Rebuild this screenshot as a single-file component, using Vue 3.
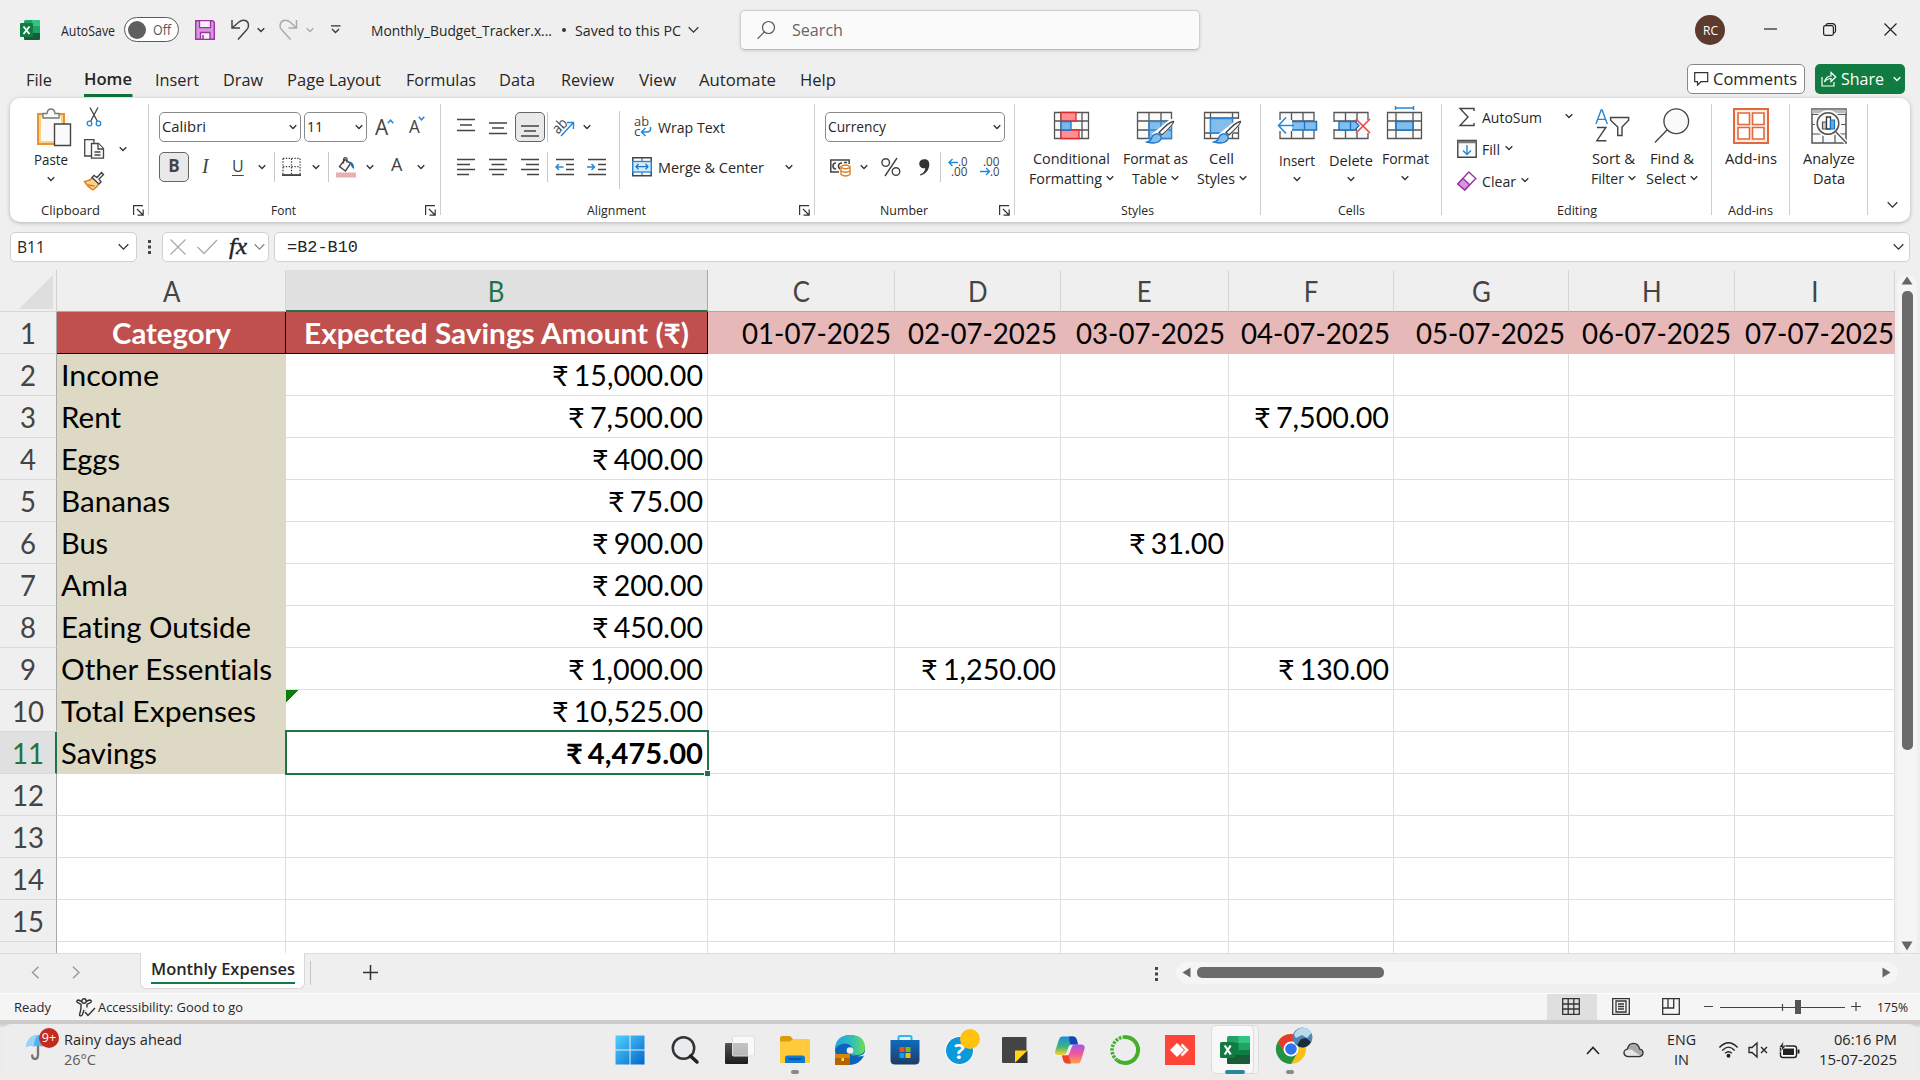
<script setup>
import { h } from 'vue'

/* Condenses or widens a label so that it takes exactly the given width. */
const vFit = {
  mounted(el, { value }) {
    if (!value) return
    const natural = el.getBoundingClientRect().width
    el.style.transform = `scaleX(${value / natural})`
    el.style.marginRight = `${value - natural}px`
  },
}

const Chev = (p) =>
  h('svg', { width: p.w || 8, height: p.w ? p.w * 0.6 : 6, viewBox: '0 0 9 6', fill: 'none', stroke: p.c || '#333', 'stroke-width': p.w ? 1 : 1.5 }, [
    h('path', { d: 'M.8 1l3.7 3.7L8.2 1' }),
  ])
const Launcher = () =>
  h('svg', { class: 'launch', width: 11, height: 11, viewBox: '0 0 11 11', fill: 'none', stroke: '#333', 'stroke-width': 1.2 }, [
    h('path', { d: 'M.6 10V.6H10M4 4l6 6M10.2 4.5v5.7H4.5' }),
  ])
const Lines = (p) =>
  h('svg', { width: 18, height: 18, viewBox: '0 0 18 18', stroke: '#444', 'stroke-width': 1.5 }, [h('path', { d: p.d })])

const tabs = [
  ['File', 26, 26], ['Home', 84, 48], ['Insert', 155, 44], ['Draw', 223, 40], ['Page Layout', 287, 94], ['Formulas', 406, 70],
  ['Data', 499, 36], ['Review', 561, 53], ['View', 639, 37], ['Automate', 699, 77], ['Help', 800, 36],
].map((t, i, a) => ({ name: t[0], w: t[2], track: (a[i + 1] ? a[i + 1][1] : 900) - t[1] }))

const cols = [
  ['A', 229], ['B', 422], ['C', 187], ['D', 166], ['E', 168], ['F', 165], ['G', 175], ['H', 166], ['I', 160],
]
const dates = ['01-07-2025', '02-07-2025', '03-07-2025', '04-07-2025', '05-07-2025', '06-07-2025', '07-07-2025']
const body = [
  ['Income', 98, '₹ 15,000.00', 151],
  ['Rent', 60, '₹ 7,500.00', 135, { F: ['₹ 7,500.00', 135] }],
  ['Eggs', 59, '₹ 400.00', 111],
  ['Bananas', 109, '₹ 75.00', 95],
  ['Bus', 47, '₹ 900.00', 111, { E: ['₹ 31.00', 95] }],
  ['Amla', 67, '₹ 200.00', 111],
  ['Eating Outside', 190, '₹ 450.00', 111],
  ['Other Essentials', 211, '₹ 1,000.00', 135, { D: ['₹ 1,250.00', 135], F: ['₹ 130.00', 111] }],
  ['Total Expenses', 195, '₹ 10,525.00', 151],
  ['Savings', 96, '₹ 4,475.00', 137],
]
const rows = []
for (let n = 1; n <= 16; n++) {
  const cells = cols.map(([c, w], i) => {
    const cell = { c, w, text: '', fit: 0, cls: [] }
    if (n === 1) {
      if (i === 0) Object.assign(cell, { text: 'Category', fit: 119, cls: ['head'] })
      else if (i === 1) Object.assign(cell, { text: 'Expected Savings Amount (₹)', fit: 385, cls: ['head'] })
      else Object.assign(cell, { text: dates[i - 2], fit: 149, cls: ['date', i === 8 ? 'edge' : ''] })
    } else if (n <= 11) {
      const r = body[n - 2]
      if (i === 0) Object.assign(cell, { text: r[0], fit: r[1], cls: ['cat'] })
      else if (i === 1) Object.assign(cell, { text: r[2], fit: r[3], cls: ['num', n === 11 ? 'sel' : '', n === 10 ? 'flag' : ''] })
      else if (r[4] && r[4][c]) Object.assign(cell, { text: r[4][c][0], fit: r[4][c][1], cls: ['num'] })
    }
    return cell
  })
  rows.push({ n, cells })
}
</script>

<template>
  <div class="screen">
    <header class="title">
      <svg class="xl" width="20" height="20" viewBox="0 0 20 20"><rect x="4" width="16" height="20" rx="1.5" fill="#21a366"/><path d="M12 0h6.5A1.5 1.5 0 0120 1.500V6h-8z" fill="#33c481"/><path d="M4 6h8v7H4z" fill="#107c41"/><path d="M4 13h16v5.500a1.500 1.500 0 01-1.500 1.500h-13A1.500 1.500 0 014 18.500z" fill="#185c37"/><path d="M12 6h8v7h-8z" fill="#21a366"/><rect y="3" width="13" height="14" rx="1" fill="#107c41"/><path d="M3.500 6.500l6 7.500M9.500 6.500l-6 7.500" stroke="#fff" stroke-width="1.900"/></svg>
      <span v-fit="54" class="s15">AutoSave</span>
      <div class="toggle"><i></i><span v-fit="18">Off</span></div>
      <svg width="20" height="20" viewBox="0 0 20 20"><path d="M.7.7h17l1.600 1.600v17H.7z" fill="#d896dd" stroke="#9a33a4" stroke-width="1.400"/><path d="M4.500.7h11v7h-11zM5.500 12.500h9.500v6.800H5.500z" fill="#f5f0f6" stroke="#9a33a4" stroke-width="1.300"/><path d="M8 15v4" stroke="#9a33a4" stroke-width="1.500"/></svg>
      <svg width="20" height="22" viewBox="0 0 20 22" fill="none" stroke="#444" stroke-width="1.500"><path d="M1 1v8h8M1 9L8 3c4-3.500 9.500-1.500 9.500 3.500.1 2-.8 3.300-2 4.500L7 20.500"/></svg>
      <Chev />
      <svg width="20" height="22" viewBox="0 0 20 22" fill="none" stroke="#aaa" stroke-width="1.500"><path d="M17.500 1v8h-8M17.500 9L11 3C7 -.5 1.500 1.500 1 6.500c-.1 2 .8 3.300 2 4.500l8.500 9.500"/></svg>
      <Chev c="#aaa" />
      <svg width="10" height="9" viewBox="0 0 10 9" fill="none" stroke="#333" stroke-width="1.300"><path d="M0 .8h9.500M1 4l3.500 3.500L8 4"/></svg>
      <span v-fit="181" class="s15">Monthly_Budget_Tracker.x...</span>
      <i class="dot"></i>
      <span v-fit="106" class="s15">Saved to this PC</span>
      <Chev :w="13" />
      <div class="search">
        <svg width="20" height="20" viewBox="0 0 20 20" fill="none" stroke="#555" stroke-width="1.200"><circle cx="11.500" cy="7.500" r="6"/><path d="M7.300 11.800L.5 18.800"/></svg>
        <span v-fit="51">Search</span>
      </div>
      <div class="avatar"><span v-fit="15">RC</span></div>
      <svg width="13" height="13" viewBox="0 0 13 13" stroke="#222" stroke-width="1.200"><path d="M0 6h13"/></svg>
      <svg width="13" height="13" viewBox="0 0 13 13" fill="none" stroke="#222" stroke-width="1.200"><rect x=".6" y="2.600" width="9.800" height="9.800" rx="1.800"/><path d="M3 2.200Q3.300.6 5 .6h4.500a3 3 0 013 3V8q0 1.500-1.600 2"/></svg>
      <svg width="13" height="13" viewBox="0 0 13 13" stroke="#222" stroke-width="1.200"><path d="M.5.500l12 12M12.500.5l-12 12"/></svg>
    </header>

    <nav class="tabs">
      <div class="tablist">
        <div v-for="t in tabs" :key="t.name" class="tab" :class="{ on: t.name === 'Home' }" :style="{ width: t.track + 'px' }">
          <span v-fit="t.w">{{ t.name }}</span>
        </div>
      </div>
      <button class="comments">
        <svg width="15" height="14" viewBox="0 0 15 14" fill="none" stroke="#333" stroke-width="1.200"><path d="M.7.7h13v9H7L3.500 13V9.700H.7z"/></svg>
        <span v-fit="84">Comments</span>
      </button>
      <button class="share">
        <svg width="16" height="16" viewBox="0 0 16 16" fill="none" stroke="#fff" stroke-width="1.200"><path d="M1 6v9h12v-4M3.500 11Q5 5 10 5V1.500L14.800 6 10 10.500V7.500Q6 7.500 3.500 11z"/></svg>
        <span v-fit="43">Share</span>
        <Chev c="#fff" />
      </button>
    </nav>

    <section class="ribbon">
      <div class="group g-clip">
        <div class="gbody clip">
          <div class="paste">
            <svg width="36" height="40" viewBox="0 0 36 40"><path d="M2 6h26v30H2z" fill="#fbd38a" stroke="#e8912d" stroke-width="2"/><path d="M5 9h20v24H5z" fill="#fafafa"/><path d="M7 10V5.500h4Q11.500 1 15 1t4 4.500h4V10z" fill="#fafafa" stroke="#777" stroke-width="1.300"/><path d="M18.500 16h16v21.500h-16z" fill="#fafafa" stroke="#444" stroke-width="1.400"/></svg>
            <span v-fit="34">Paste</span>
            <Chev />
          </div>
          <div class="clipcol">
            <svg width="20" height="20" viewBox="0 0 20 20" fill="none" stroke-width="1.300"><path d="M6 .5l7.500 14M14 .5l-7.500 14" stroke="#444"/><circle cx="5.500" cy="16.500" r="2.300" stroke="#2488d8"/><circle cx="14.500" cy="16.500" r="2.300" stroke="#2488d8"/></svg>
            <svg width="21" height="20" viewBox="0 0 21 20" fill="#fafafa" stroke="#444" stroke-width="1.300"><path d="M7 17H.7V.7H10v3"/><path d="M7.500 4.500h7l5 5v9.700h-12z"/><path d="M14 4.500v5.500h5.500M10.500 13h6M10.500 16h6"/></svg>
            <svg width="21" height="20" viewBox="0 0 21 20" stroke-width="1.400"><path d="M.5 10.500Q6.500 9.500 9 6.500l6 6Q13.500 16 9 19 3.500 16 .5 10.500z" fill="#fbd38a" stroke="#e07b1c"/><path d="M3.500 14l7 1" stroke="#e07b1c"/><path d="M8 6.500l2-2 3 2 4.500-5 2 2L15 8l2 3-2 2z" fill="#fafafa" stroke="#444"/></svg>
          </div>
          <div class="clipchev"><Chev /></div>
        </div>
        <div class="glabel"><span class="gl"><span v-fit="59">Clipboard</span></span><Launcher /></div>
      </div>
      <i class="sep"></i>

      <div class="group g-font">
        <div class="gbody">
          <div class="row font1">
            <div class="combo c142"><span v-fit="44">Calibri</span><Chev /></div>
            <div class="combo c63"><span v-fit="16">11</span><Chev /></div>
            <div class="grow"><span>A</span><svg width="7" height="5" viewBox="0 0 7 5" fill="none" stroke="#2488d8" stroke-width="1.500"><path d="M.7 4.200L3.500 1.200l2.800 3"/></svg></div>
            <div class="grow small"><span>A</span><svg width="7" height="5" viewBox="0 0 7 5" fill="none" stroke="#2488d8" stroke-width="1.500"><path d="M.7.8l2.800 3 2.800-3"/></svg></div>
          </div>
          <div class="row font2">
            <div class="press b">B</div>
            <span class="it">I</span>
            <span class="un">U</span>
            <Chev />
            <i class="vs"></i>
            <svg width="19" height="20" viewBox="0 0 20 20" fill="none" stroke="#444"><path d="M1 1h18v17M1 1v17M10 1v17M1 9.500h18" stroke-dasharray="1.500 1.500" stroke-width="1.300"/><path d="M0 18.500h20" stroke-width="2"/></svg>
            <Chev />
            <i class="vs"></i>
            <svg width="20" height="21" viewBox="0 0 20 21"><path d="M9 2.500l-5.500 7 6 4.500 5-7.500z" fill="#fafafa" stroke="#444" stroke-width="1.400"/><path d="M7.500 6.500V2Q9-.5 11 1.500v4" fill="none" stroke="#444" stroke-width="1.200"/><path d="M13.500 4.500Q18.500 5 18 12 15.500 11 14.500 7z" fill="#1a74c4"/><rect y="15.500" width="20" height="5" fill="#e6b0b0"/></svg>
            <Chev />
            <span class="ltr">A</span>
            <Chev />
          </div>
        </div>
        <div class="glabel"><span class="gl"><span v-fit="25">Font</span></span><Launcher /></div>
      </div>
      <i class="sep"></i>

      <div class="group g-align">
        <div class="gbody split">
          <div class="alleft">
            <div class="row al1">
              <Lines d="M0 1.500h18M3 7h12M0 12.500h18" />
              <Lines d="M0 5h18M3 10h12M0 15.500h18" />
              <div class="press"><Lines d="M0 8h18M3 13h12M0 18h18" /></div>
              <i class="vs"></i>
              <svg width="22" height="22" viewBox="0 0 22 22"><text x="-1" y="15" font-size="15" font-family="Open Sans" fill="#444" transform="rotate(-45 6 11)" textLength="15" lengthAdjust="spacingAndGlyphs">ab</text><path d="M7 20L19 7M13 6.500h6.500V13" fill="none" stroke="#2488d8" stroke-width="1.400"/></svg>
              <Chev />
            </div>
            <div class="row al2">
              <Lines d="M0 1.500h18M0 6.500h13M0 11.500h18M0 16.500h12" />
              <Lines d="M0 1.500h18M2.500 6.500h13M0 11.500h18M3 16.500h12" />
              <Lines d="M0 1.500h18M5 6.500h13M0 11.500h18M6 16.500h12" />
              <i class="vs"></i>
              <svg width="19" height="18" viewBox="0 0 19 18" fill="none" stroke="#444" stroke-width="1.500"><path d="M1 1.500h18M11 6.500h8M11 11.500h8M1 16.500h18"/><path d="M8.500 9H1M4 6L1 9l3 3" stroke="#2488d8"/></svg>
              <svg width="19" height="18" viewBox="0 0 19 18" fill="none" stroke="#444" stroke-width="1.500"><path d="M1 1.500h18M11 6.500h8M11 11.500h8M1 16.500h18"/><path d="M0 9h7.500M4.500 6l3 3-3 3" stroke="#2488d8"/></svg>
            </div>
          </div>
          <i class="vs tall"></i>
          <div class="alright">
            <div class="row wr">
              <svg width="20" height="22" viewBox="0 0 20 22"><text x="2" y="10" font-size="13.500" font-family="Open Sans" fill="#444" textLength="15" lengthAdjust="spacingAndGlyphs">ab</text><text x="2" y="20" font-size="13.500" font-family="Open Sans" fill="#444">c</text><path d="M18.500 11v2q0 3-3.500 3h-5M13.500 12l-4 4 4 4" fill="none" stroke="#2488d8" stroke-width="1.500"/></svg>
              <span v-fit="67">Wrap Text</span>
            </div>
            <div class="row wr">
              <svg width="20" height="20" viewBox="0 0 20 20"><path d="M.8.800h18.400v17.900H.8z" fill="#fafafa" stroke="#444" stroke-width="1.500"/><path d="M10 1v4M10 15v4" stroke="#444"/><rect x=".8" y="4.500" width="18.400" height="10.500" fill="#d5ebfb" stroke="#2488d8" stroke-width="1.300"/><path d="M4 9.700h12M6.500 7L4 9.700l2.500 2.700M13.500 7L16 9.700l-2.500 2.700" fill="none" stroke="#1a74c4" stroke-width="1.300"/></svg>
              <span v-fit="106">Merge &amp; Center</span>
              <Chev />
            </div>
          </div>
        </div>
        <div class="glabel"><span class="gl"><span v-fit="59">Alignment</span></span><Launcher /></div>
      </div>
      <i class="sep"></i>

      <div class="group g-num">
        <div class="gbody">
          <div class="row n1"><div class="combo c180"><span v-fit="58">Currency</span><Chev /></div></div>
          <div class="row n2">
            <svg width="21" height="19" viewBox="0 0 21 19"><path d="M19.200 6V2H.8v12H9" fill="#fafafa" stroke="#444" stroke-width="1.500"/><path d="M6 5Q3 5 3 8t3 3M12 5Q8.500 5 8.500 8q0 2 1.500 3M14 4.500h3" fill="none" stroke="#444" stroke-width="1.600"/><path d="M11 8.500v8q4.500 3 9 0v-8q-4.500-3-9 0zM11 9.500q4.500 2.500 9 0M11 13q4.500 2.500 9 0" fill="#fff" stroke="#e07b1c" stroke-width="1.400"/></svg>
            <Chev />
            <svg width="20" height="20" viewBox="0 0 20 20" fill="none" stroke="#444" stroke-width="1.400"><circle cx="4.700" cy="5.500" r="3.800"/><circle cx="15" cy="14.500" r="3.800"/><path d="M16 1L4 19"/></svg>
            <svg width="12" height="18" viewBox="0 0 12 18"><path d="M1 16.500Q6 14.500 6.300 10A4.500 4.500 0 114.500 1.300C8.500.5 10.500 3 10.300 7 10 12.500 6 16.500 1 17.500z" fill="#333"/></svg>
            <i class="vs"></i>
            <svg width="20" height="20" viewBox="0 0 20 20" fill="#444" font-family="Open Sans" font-size="12.500"><text x="10" y="9" textLength="9.500" lengthAdjust="spacingAndGlyphs">.0</text><text x="3" y="19" textLength="16.500" lengthAdjust="spacingAndGlyphs">.00</text><path d="M10 5.500H1M4.500 2L1 5.500 4.500 9" fill="none" stroke="#2488d8" stroke-width="1.400"/></svg>
            <svg width="20" height="20" viewBox="0 0 20 20" fill="#444" font-family="Open Sans" font-size="12.500"><text x="3" y="9" textLength="16.500" lengthAdjust="spacingAndGlyphs">.00</text><text x="10" y="19" textLength="9.500" lengthAdjust="spacingAndGlyphs">.0</text><path d="M0 14.500h9.500M6 11l3.500 3.500L6 18" fill="none" stroke="#2488d8" stroke-width="1.400"/></svg>
          </div>
        </div>
        <div class="glabel"><span class="gl"><span v-fit="48">Number</span></span><Launcher /></div>
      </div>
      <i class="sep"></i>

      <div class="group g-styles">
        <div class="gbody bigs st">
          <div class="big">
            <svg width="38" height="36" viewBox="0 0 38 36" stroke-width="1.300"><path d="M1.500 4.500h34v26h-34zM1.500 13h34M1.500 22h34M8 4.500v26M29 4.500v26" fill="#fafafa" stroke="#555"/><path d="M8 4.500h15V13H8zM8 22h18v8.500H8z" fill="#ff8f94" stroke="#d92c2c"/><path d="M8 13.500h10V22H8z" fill="#7ab6e8" stroke="#1a74c4"/></svg>
            <span v-fit="77">Conditional</span>
            <span class="two"><span v-fit="73">Formatting</span><Chev /></span>
          </div>
          <div class="big">
            <svg width="38" height="36" viewBox="0 0 38 36" stroke-width="1.300"><path d="M1.500 4.500h34v26h-34z" fill="#fafafa" stroke="#555"/><path d="M13 13.500h22.500v17H13z" fill="#83bdec"/><path d="M1.500 13h34M1.500 22H13M13 4.500v26M25 4.500V13" stroke="#555"/><path d="M13 22h22M25 13v17M13 13.500h22.500v17H13z" fill="none" stroke="#2f86cf"/><path d="M38 13L23 29l-4-3L35 13z" fill="#fafafa" stroke="#fff" stroke-width="4"/><path d="M37.500 13.500Q38 16 26 27l-3-2.500Q34 13 37.500 13.500z" fill="#fafafa" stroke="#444"/><path d="M11 34q4-1 5-5 2-4 6-3t3 5q-3 6-14 3z" fill="#83bdec" stroke="#1a74c4"/></svg>
            <span v-fit="65">Format as</span>
            <span class="two"><span v-fit="35">Table</span><Chev /></span>
          </div>
          <div class="big">
            <svg width="38" height="36" viewBox="0 0 38 36" stroke-width="1.300"><path d="M1.500 4.500h34v26h-34zM1.500 10h34M1.500 25h34M7.500 4.500v26M29.500 4.500v26" fill="#fafafa" stroke="#555"/><path d="M7.500 10.500h22V25h-22z" fill="#83bdec" stroke="#2f86cf"/><path d="M38 13L23 29l-4-3L35 13z" fill="#fafafa" stroke="#fff" stroke-width="4"/><path d="M37.500 13.500Q38 16 26 27l-3-2.500Q34 13 37.500 13.500z" fill="#fafafa" stroke="#444"/><path d="M11 34q4-1 5-5 2-4 6-3t3 5q-3 6-14 3z" fill="#83bdec" stroke="#1a74c4"/></svg>
            <span v-fit="25">Cell</span>
            <span class="two"><span v-fit="38">Styles</span><Chev /></span>
          </div>
        </div>
        <div class="glabel"><span class="gl"><span v-fit="33">Styles</span></span></div>
      </div>
      <i class="sep"></i>

      <div class="group g-cells">
        <div class="gbody bigs ce">
          <div class="big low">
            <svg width="40" height="36" viewBox="0 0 40 36" stroke-width="1.300"><path d="M3 4.500h34v26H3zM3 13h34M14.500 4.500v26M26 4.500v26" fill="#fafafa" stroke="#555"/><path d="M14 13.500h25.500V22H14z" fill="#83bdec" stroke="#1a74c4" stroke-width="1.500"/><path d="M27.500 13.500V22" stroke="#1a74c4"/><path d="M0 12h15v11H0z" fill="#fff"/><path d="M17 17.500H1.500M9 9.500l-7.500 8 7.500 8" fill="none" stroke="#2488d8" stroke-width="1.500"/></svg>
            <span v-fit="36">Insert</span><Chev />
          </div>
          <div class="big low">
            <svg width="40" height="36" viewBox="0 0 40 36" stroke-width="1.300"><path d="M3 4.500h34v26H3zM3 13h34M3 22h34M14.500 4.500v26M26 4.500v26" fill="#fafafa" stroke="#555"/><path d="M0 14h8v7H0zM26 12h14v13H26z" fill="#fff"/><path d="M8 13.500h16l4 4-4 4.500H8zM19.500 13.500V22" fill="#83bdec" stroke="#1a74c4" stroke-width="1.400"/><path d="M25 11l14 14M39 11L25 25" stroke="#ef4848" stroke-width="1.700"/></svg>
            <span v-fit="44">Delete</span><Chev />
          </div>
          <div class="big">
            <svg width="38" height="36" viewBox="0 0 38 36" stroke-width="1.300"><path d="M9.500-2v4M27.500-2v4M9.500 0h18" stroke="#2488d8" stroke-width="1.500"/><path d="M1.500 4.500h34v26h-34zM1.500 13h34M1.500 22h34M10 4.500v26M27 4.500v26" fill="#fafafa" stroke="#555"/><path d="M10 13.500h17V22H10z" fill="#83bdec" stroke="#1a74c4" stroke-width="1.500"/></svg>
            <span v-fit="47">Format</span><span class="two"><Chev /></span>
          </div>
        </div>
        <div class="glabel"><span class="gl"><span v-fit="27">Cells</span></span></div>
      </div>
      <i class="sep"></i>

      <div class="group g-edit">
        <div class="gbody ed">
          <div class="edleft">
            <div class="edrow">
              <svg width="20" height="20" viewBox="0 0 20 20" fill="none" stroke="#444" stroke-width="1.400"><path d="M17 4V1.500H3L11 10l-8 8.500h14V16"/></svg>
              <span v-fit="60">AutoSum</span><Chev class="far" />
            </div>
            <div class="edrow">
              <svg width="20" height="20" viewBox="0 0 20 20" fill="#fafafa" stroke="#444" stroke-width="1.400"><path d="M.8 1.500h18.400v16.700H.8z"/><path d="M.8 3h18.400" stroke-width="2.500" stroke="#777"/><path d="M10 6v9M6 11.500l4 4 4-4" fill="none" stroke="#2488d8"/></svg>
              <span v-fit="18">Fill</span><Chev />
            </div>
            <div class="edrow">
              <svg width="20" height="20" viewBox="0 0 20 20" stroke="#9a33a4" stroke-width="1.400"><path d="M11.800 1l7 6.500-11 11.500-7-6z" fill="#fff"/><path d="M6 7.500l6.500 6-4.700 5.500-7-6z" fill="#d896dd"/></svg>
              <span v-fit="34">Clear</span><Chev />
            </div>
          </div>
          <div class="big">
            <svg width="40" height="38" viewBox="0 0 40 38" fill="none" stroke-width="1.500"><path d="M2 17L7.500 2h1L14 17M4 12h8" stroke="#2488d8"/><path d="M3 20.500h9.500L3 34.500h10" stroke="#444"/><path d="M17.500 10h19v3l-7 7v9h-4.500v-9l-7.500-7z" stroke="#444" fill="#fafafa"/></svg>
            <span v-fit="43">Sort &amp;</span>
            <span class="two"><span v-fit="33">Filter</span><Chev /></span>
          </div>
          <div class="big">
            <svg width="38" height="38" viewBox="0 0 38 38" fill="#fafafa" stroke="#444" stroke-width="1.400"><circle cx="23.500" cy="14" r="13"/><path d="M14 23L1 36.500"/></svg>
            <span v-fit="44">Find &amp;</span>
            <span class="two"><span v-fit="40">Select</span><Chev /></span>
          </div>
        </div>
        <div class="glabel"><span class="gl"><span v-fit="40">Editing</span></span></div>
      </div>
      <i class="sep"></i>

      <div class="group g-add">
        <div class="gbody bigs one">
          <div class="big">
            <svg width="36" height="36" viewBox="0 0 36 36" fill="none" stroke="#e2683d" stroke-width="2"><path d="M1 1h34v34H1z" fill="#fdeee8"/><path d="M5 5h11.500v11.500H5zM19.500 5H31v11.500H19.500zM5 19.500h11.500V31H5zM19.500 19.500H31V31H19.500z" fill="#fff" stroke-width="1.600"/></svg>
            <span v-fit="52">Add-ins</span>
          </div>
        </div>
        <div class="glabel"><span class="gl"><span v-fit="45">Add-ins</span></span></div>
      </div>
      <i class="sep"></i>

      <div class="group g-add">
        <div class="gbody bigs one">
          <div class="big">
            <svg width="36" height="36" viewBox="0 0 36 36" fill="none" stroke="#555" stroke-width="1.500"><path d="M1 1h34v34H1z" fill="#fafafa"/><path d="M1 3.500h34" stroke="#bbb" stroke-width="3.500"/><path d="M1 6.500h34M1 16.500h34M1 26h34M12 26v9M24 26v9" stroke-width="1.200"/><circle cx="17" cy="15.500" r="12.500" fill="#fff" stroke="#fff"/><circle cx="17" cy="15.500" r="10.800" fill="#fafafa"/><path d="M25 24l10 10.500" stroke="#fff" stroke-width="4"/><path d="M24.500 23.500l11 11.500"/><path d="M11.500 14h4v7h-4z" fill="#ccc" stroke-width="1.200"/><path d="M15.500 9h4v12h-4z" fill="#fff" stroke="#333" stroke-width="1.300"/><path d="M19.500 12h4v9h-4z" fill="#62a9e4" stroke="#1a74c4" stroke-width="1.200"/></svg>
            <span v-fit="52">Analyze</span>
            <span class="two"><span v-fit="32">Data</span></span>
          </div>
        </div>
      </div>
      <i class="sep"></i>
      <div class="collapse"><Chev :w="13" /></div>
    </section>

    <section class="fbar">
      <div class="box name"><span v-fit="28">B11</span><Chev :w="13" /></div>
      <svg width="3" height="14" viewBox="0 0 3 14" fill="#444"><path d="M0 0h3v3H0zM0 5.500h3v3H0zM0 11h3v3H0z"/></svg>
      <div class="box tools">
        <svg width="16" height="16" viewBox="0 0 16 16" stroke="#aaa" stroke-width="1.300"><path d="M.5.500l15 15M15.500.5l-15 15"/></svg>
        <svg width="21" height="16" viewBox="0 0 21 16" fill="none" stroke="#aaa" stroke-width="1.300"><path d="M.5 8l6.500 6.500L20 1"/></svg>
        <span class="fx" v-fit="18">fx</span>
        <Chev :w="13" c="#888" />
      </div>
      <div class="box formula"><span v-fit="71">=B2-B10</span><Chev :w="13" /></div>
    </section>

    <main class="sheet">
      <div class="grid">
        <div class="colhead">
          <div class="corner"><svg width="34" height="34" viewBox="0 0 34 34"><path d="M34 0v34H0z" fill="#dedede"/></svg></div>
          <div v-for="c in cols" :key="c[0]" class="ch" :class="{ act: c[0] === 'B' }" :style="{ width: c[1] + 'px' }"><span>{{ c[0] }}</span></div>
        </div>
        <div v-for="r in rows" :key="r.n" class="line" :class="{ actr: r.n === 11 }">
          <div class="rh"><span v-if="r.n < 16" v-fit="r.n > 9 ? 32 : 16">{{ r.n }}</span></div>
          <div v-for="c in r.cells" :key="c.c" class="cell" :class="c.cls" :style="{ width: c.w + 'px' }">
            <span v-if="c.text" v-fit="c.fit">{{ c.text }}</span>
          </div>
        </div>
      </div>
      <div class="vscroll">
        <svg width="12" height="9" viewBox="0 0 12 9"><path d="M6 .5l5.500 8H.5z" fill="#666"/></svg>
        <i></i>
        <svg width="12" height="10" viewBox="0 0 12 10"><path d="M.5.500h11L6 9.500z" fill="#666"/></svg>
      </div>
    </main>

    <section class="sheets">
      <svg width="8" height="13" viewBox="0 0 8 13" fill="none" stroke="#999" stroke-width="1.400"><path d="M7.500 .7L1.500 6.500l6 5.800"/></svg>
      <svg width="8" height="13" viewBox="0 0 8 13" fill="none" stroke="#999" stroke-width="1.400"><path d="M1 .7l6 5.800-6 5.800"/></svg>
      <div class="stab"><span><b v-fit="144">Monthly Expenses</b></span></div>
      <i class="ssep"></i>
      <svg class="plus" width="15" height="15" viewBox="0 0 15 15" stroke="#333" stroke-width="1.500"><path d="M7.500 0v15M0 7.500h15"/></svg>
      <svg class="dots" width="3" height="14" viewBox="0 0 3 14" fill="#444"><path d="M0 0h3v3H0zM0 5.500h3v3H0zM0 11h3v3H0z"/></svg>
      <div class="hscroll">
        <svg width="9" height="11" viewBox="0 0 9 11"><path d="M8.500.5v10L.5 5.500z" fill="#666"/></svg>
        <i></i>
        <svg width="9" height="11" viewBox="0 0 9 11"><path d="M.5.5v10l8-5z" fill="#666"/></svg>
      </div>
    </section>

    <section class="status">
      <span v-fit="37">Ready</span>
      <svg class="acc" width="20" height="19" viewBox="0 0 20 19" fill="none" stroke="#333" stroke-width="1.400"><circle cx="8" cy="3" r="2.200"/><path d="M5.800 3.500L2.500 2Q.5 2 1 4l4 2.500v4L3.500 17q1.500 2 3-.5L8 12M10 3.500L13.500 2q2.500 0 1.500 2.300L11 6.500v3M9 14l3 3.500L19 10"/></svg>
      <span v-fit="145">Accessibility: Good to go</span>
      <div class="views">
        <div class="vw on"><svg width="18" height="17" viewBox="0 0 18 17" fill="none" stroke="#333" stroke-width="1.300"><path d="M.7.7h16.600v15.600H.7zM6.200.7v15.600M11.800.7v15.600M.7 6h16.600M.7 11h16.600"/></svg></div>
        <div class="vw"><svg width="18" height="17" viewBox="0 0 18 17" fill="none" stroke="#333" stroke-width="1.300"><path d="M.7.7h16.600v15.600H.7zM4 3h10v11H4zM6 6h6M6 8.500h6M6 11h6"/></svg></div>
        <div class="vw"><svg width="18" height="17" viewBox="0 0 18 17" fill="none" stroke="#333" stroke-width="1.300"><path d="M.7.7h16.600v15.600H.7zM.7 10h11V.7M6 .7V10"/></svg></div>
      </div>
      <svg class="zoom" width="154" height="16" viewBox="0 0 154 16" stroke="#444" stroke-width="1.200"><path d="M0 7.500h9M147 7.500h10M152 3v9M16 8.500h125M78.500 5v7"/><rect x="91" y="1" width="6" height="14" fill="#555" stroke="none"/></svg>
      <span v-fit="31">175%</span>
    </section>

    <footer class="task">
      <div class="bar">
        <div class="weather">
          <svg width="32" height="40" viewBox="0 0 32 40"><path d="M12 16v16.500q-.3 3.500-3 3.500t-2.800-3.500" fill="none" stroke="#7a7470" stroke-width="2.300" stroke-linecap="round"/><path d="M0 24Q2 12 12 12t12 12l-4-1.500-4 1-4-1-4 1-4-1z" fill="#52b1f5"/><path d="M0 24Q2 12 12 12q-4 4-4 11.500l-4-1z" fill="#9ad2fb"/></svg>
          <span class="badge">9+</span>
        </div>
        <div class="wtext"><span v-fit="118">Rainy days ahead</span><span class="dim" v-fit="32">26°C</span></div>

        <div class="apps">
          <div class="app"><svg width="30" height="30" viewBox="0 0 30 30"><defs><linearGradient id="win" x2="1" y2="1"><stop stop-color="#52d2ff"/><stop offset="1" stop-color="#0067cc"/></linearGradient></defs><path d="M.5.500h14v14H.5zM15.500.500h14v14h-14zM.5 15.500h14v14H.5zM15.500 15.500h14v14h-14z" fill="url(#win)"/></svg></div>
          <div class="app"><svg width="30" height="30" viewBox="0 0 30 30"><circle cx="13.500" cy="13" r="10.700" fill="#e9ebed" stroke="#333" stroke-width="2.500"/><path d="M20.500 21l6.500 6" stroke="#222" stroke-width="3.500" stroke-linecap="round"/></svg></div>
          <div class="app"><svg width="32" height="30" viewBox="0 0 32 30"><defs><linearGradient id="tv" x2="0" y2="1"><stop stop-color="#555"/><stop offset="1" stop-color="#1b1b1b"/></linearGradient></defs><rect x="1" y="8" width="23" height="21" rx="1" fill="url(#tv)"/><rect x="8.500" y="1" width="22" height="20" rx="1" fill="#fff" fill-opacity=".65" stroke="#ddd"/></svg></div>
          <div class="app run"><svg width="30" height="30" viewBox="0 0 30 30"><path d="M0 3q0-2 2-2h8l3 3v4H0z" fill="#dd9c05"/><path d="M0 6.500h10L13 4h15.500Q30 4 30 5.500V28H0z" fill="#ffcb3c"/><path d="M5 28v-5q0-2.500 2.500-2.500h15Q25 20.500 25 23v5z" fill="#1279d3"/><path d="M8.500 24h13" stroke="#0a4f96" stroke-width="1.500"/></svg></div>
          <div class="app"><svg width="30" height="30" viewBox="0 0 30 30"><defs><linearGradient id="eg"><stop stop-color="#1ba3e8"/><stop offset=".6" stop-color="#35c1b4"/><stop offset="1" stop-color="#6ddf4d"/></linearGradient></defs><circle cx="15" cy="15" r="15" fill="#0c64b8"/><path d="M0 14Q1 0 15 0q15 0 15 13 0 7-8 7-5 0-6-2 3-3 1-6Q13 7 7 9q-4 1-7 5z" fill="url(#eg)"/><path d="M16 18q2 4 12 3l2-1v-3q-2 4-8 4t-6-3z" fill="#ededed"/><circle cx="15" cy="15.500" r="3.300" fill="#ededed"/><path d="M0 19h15v11H0z" fill="#b46500"/><path d="M0 19h15v4H0z" fill="#d98508"/><path d="M6.500 23h2.500v3H6.500z" fill="#ffd84c"/></svg></div>
          <div class="app"><svg width="30" height="30" viewBox="0 0 30 30"><defs><linearGradient id="st" x2="0" y2="1"><stop stop-color="#0f6cbd"/><stop offset="1" stop-color="#1e3a66"/></linearGradient></defs><path d="M8.500 6V2.500Q8.500 1 10 1h10q1.500 0 1.500 1.500V6" fill="none" stroke="#28b9f0" stroke-width="2"/><path d="M.5 5h29v20q0 4.500-4.500 4.500H5Q.5 29.500.5 25z" fill="url(#st)"/><path d="M9.500 12h5v5h-5z" fill="#f25022"/><path d="M15.500 12h5v5h-5z" fill="#7fba00"/><path d="M9.500 18h5v5h-5z" fill="#00a4ef"/><path d="M15.500 18h5v5h-5z" fill="#ffb900"/></svg></div>
          <div class="app"><div class="help">?<i></i></div></div>
          <div class="app"><svg width="28" height="28" viewBox="0 0 28 28"><path d="M2 1h23.500v26H2q-1 0-1-1V2q0-1 1-1z" fill="#444"/><path d="M14 27V14.500h12.500z" fill="#ffd60a"/><path d="M26.500 14.500V27H14z" fill="#333"/></svg></div>
          <div class="app"><svg width="30" height="28" viewBox="0 0 30 28"><defs><linearGradient id="ca" x2="0" y2="1"><stop stop-color="#1a8ee0"/><stop offset=".55" stop-color="#3fb37a"/><stop offset="1" stop-color="#ffd02f"/></linearGradient><linearGradient id="cb" x2="0" y2="1"><stop stop-color="#a458ee"/><stop offset=".5" stop-color="#ef5a98"/><stop offset="1" stop-color="#ffa24c"/></linearGradient></defs><path d="M7 .5h11q3 0 4 4l1 4h-6q-3 0-4 4l-1.500 4Q10.500 19 8 19H3Q-1 19 .5 14L4 3.500Q5 .5 7 .5z" fill="url(#ca)"/><path d="M14 .5h4q3 0 4 4l1 4h-6q-2.500 0-2.500-3z" fill="#1743b8"/><path d="M23 27.500H12q-3 0-4-4L7 19.500h4q3 0 4-4l2-5q.7-2 3-2h6q4.500 0 3.500 4.500L26 24.500q-1 3-3 3z" fill="url(#cb)"/><path d="M7 19.500h5q2 0 2.500 3L16 27.500h-4q-3 0-4-4z" fill="#e8452c"/></svg></div>
          <div class="app"><svg width="30" height="30" viewBox="0 0 30 30" fill="none" stroke="#43b02a"><path d="M15 2A13 13 0 117 25.200" stroke-width="4"/><path d="M15 2A13 13 0 007 25.200" stroke-width="3.500" stroke-dasharray="2.500 1.200"/></svg></div>
          <div class="app"><svg width="30" height="30" viewBox="0 0 30 30"><path d="M0 0h30v30H0z" fill="#ff4438"/><path d="M12 8l7 7-7 7-7-7z" fill="#fff"/><path d="M16.500 9.500L22 15l-5.500 5.500" fill="none" stroke="#fff" stroke-width="2.500"/></svg></div>
          <div class="app tile"><svg width="30" height="28" viewBox="0 0 30 28"><rect x="7" width="23" height="28" rx="1.500" fill="#21a366"/><path d="M18.500 0h10Q30 0 30 1.500V7H18.500z" fill="#33c481"/><path d="M7 7h11.500v12H7z" fill="#107c41"/><path d="M7 19h23v7.500q0 1.500-1.500 1.500h-20Q7 28 7 26.500z" fill="#185c37"/><path d="M18.500 14H30v5H18.500z" fill="#107c41"/><rect y="6" width="15.500" height="16" rx="1.500" fill="#107c41"/><path d="M4.700 9.500l6 9M10.700 9.500l-6 9" stroke="#fff" stroke-width="2.200"/></svg></div>
          <div class="app run chrome"><svg width="38" height="38" viewBox="0 0 38 38"><g transform="translate(1 7)"><circle cx="15" cy="15" r="15" fill="#fbc116"/><path d="M2 7.500A15 15 0 0128 7.500H15L8.500 19z" fill="#e33b2e"/><path d="M2 7.500A15 15 0 0015 30l6.500-11.500h-13z" fill="#229342"/><circle cx="15" cy="15" r="7.500" fill="#fff"/><circle cx="15" cy="15" r="5.800" fill="#2f74ee"/></g><circle cx="27.500" cy="10.500" r="10" fill="#4a86b8"/><path d="M19 8q2-7 9-7.300 6 .3 8.500 5.300L32 11l-5-3-6 3z" fill="#b9d9ec"/><path d="M22 18l4-6 5-1 5 4q-3 5-8 5.500-4 0-6-2.500z" fill="#1c2b38"/></svg></div>
        </div>

        <div class="tray">
          <svg width="14" height="9" viewBox="0 0 14 9" fill="none" stroke="#222" stroke-width="1.600"><path d="M1 8l6-6.500L13 8"/></svg>
          <svg width="21" height="16" viewBox="0 0 22 16"><path d="M5 14.800Q1 14.500 1 11q0-3 3.500-4Q6 1 11 1t6.500 6q3.500.5 3.500 4t-4 3.800z" fill="#aaa" stroke="#333" stroke-width="1.400"/><path d="M2 9q6-3 9 0l7 5H5q-3.500-1-3-5z" fill="#e6e6e6"/></svg>
          <div class="lang"><span v-fit="29">ENG</span><span v-fit="15">IN</span></div>
          <svg width="21" height="18" viewBox="0 0 22 18" fill="none" stroke="#222" stroke-width="1.500"><path d="M1.500 6.500Q11-3.500 20.500 6.500M4.500 9.500q6.500-7 13 0M7.500 12.500q3.500-3.500 7 0"/><circle cx="11" cy="15" r="1.300" fill="#222"/></svg>
          <svg width="21" height="16" viewBox="0 0 21 16" fill="none" stroke="#222" stroke-width="1.300"><path d="M1 5.500h3L9 1v14l-5-4.500H1zM13 5l6 6M19 5l-6 6"/></svg>
          <svg width="22" height="18" viewBox="0 0 22 18"><rect x="2.500" y="5" width="16" height="11.500" rx="2.500" fill="#fff" stroke="#222" stroke-width="1.400"/><rect x="5" y="7.500" width="11" height="6.500" fill="#222"/><path d="M20.500 8.500v4" stroke="#222" stroke-width="2"/><path d="M5.500 0L1 6.500h3L2.500 11 8 5H5z" fill="#222" stroke="#ededed" stroke-width=".6"/></svg>
          <div class="clock"><span v-fit="63">06:16 PM</span><span v-fit="78">15-07-2025</span></div>
        </div>
      </div>
    </footer>
  </div>
</template>

<style>
body { margin: 0; }
svg { display: block; flex: none; overflow: visible; }
</style>

<style scoped>
.screen { width: 1920px; height: 1080px; overflow: hidden; background: #efefef; display: flex; flex-direction: column; font-family: "Open Sans", "Noto Sans", sans-serif; font-size: 14.5px; color: #262626; }
span, b { display: inline-block; white-space: nowrap; transform-origin: 0 50%; flex: none; }
i { display: block; flex: none; font-style: normal; }
button { font: inherit; color: inherit; padding: 0; box-sizing: border-box; }

.title { height: 60px; display: grid; align-items: center; justify-items: start; padding-left: 20px; grid-template-columns: 41px 63px 71px 36px 26px 22px 27px 25px 40px 190px 14px 112px 53px 955px 69px 59px 61px 30px; }
.s15 { font-size: 14.5px; }
.toggle { width: 55px; height: 25px; box-sizing: border-box; border: 1px solid #5a5a5a; border-radius: 13px; background: #fff; display: flex; align-items: center; padding-left: 3px; gap: 7px; font-size: 14px; color: #555; }
.toggle i { width: 18px; height: 18px; border-radius: 50%; background: #5f5f5f; }
.toggle, .title > svg { margin-top: -1px; }
.dot { width: 4px; height: 4px; border-radius: 50%; background: #333; margin-left: 1px; }
.search { width: 460px; height: 40px; box-sizing: border-box; border: 1px solid #d0d0d0; border-bottom-color: #bbb; border-radius: 5px; background: #fafafa; box-shadow: 0 1px 3px rgba(0,0,0,.15); display: flex; align-items: center; padding-left: 16px; gap: 15px; font-size: 16.5px; color: #666; }
.search span { position: relative; top: -1px; }
.avatar { width: 30px; height: 30px; border-radius: 50%; background: #5d3a2e; color: #fff; display: flex; align-items: center; justify-content: center; font-size: 12px; }

.tabs { height: 38px; display: flex; align-items: center; padding-left: 26px; box-sizing: border-box; font-size: 16.8px; }
.tablist { display: flex; width: 1661px; }
.tab { height: 36px; display: flex; align-items: center; padding-top: 1px; margin-left: -.3px; margin-right: .3px; }
.tab.on { font-weight: 600; }
.tab.on span { background: linear-gradient(#0f703b, #0f703b) 0 31px / 100% 3px no-repeat; padding: 4px 0 7px; }
.comments, .share { height: 30px; border-radius: 5px; display: flex; align-items: center; font-size: 16.8px; }
.comments { width: 118px; border: 1px solid #888; background: #fff; padding-left: 6px; gap: 4px; }
.comments span, .share span { margin-top: -1px; }
.share { width: 90px; border: 0; background: #107c41; color: #fff; margin-left: 10px; padding-left: 6px; gap: 4px; }
.share svg:last-child { margin-left: 5px; }

.ribbon { height: 124px; margin: 0 10px; border-radius: 10px; background: #fff; display: flex; box-shadow: 0 1px 4px rgba(0,0,0,.25); flex: none; }
.sep { width: 1px; margin: 6px 0 7px; background: #cfcfcf; }
.group { display: flex; flex-direction: column; flex: none; }
.gbody { height: 100px; flex: none; }
.glabel { height: 24px; display: flex; align-items: center; font-size: 13px; }
.gl { flex: 1; display: flex; justify-content: center; }
.launch { margin: 0 4px 0 7px; }
.g-clip { width: 138px; } .g-font { width: 291px; } .g-align { width: 373px; } .g-num { width: 199px; }
.g-clip .launch { margin-left: 2px; }
.g-styles { width: 245px; } .g-cells { width: 180px; } .g-edit { width: 269px; } .g-add { width: 77px; }
.row { height: 30px; display: grid; align-items: center; justify-items: start; margin-top: 10px; }
.row:first-child { margin-top: 14px; }

.clip { display: flex; }
.paste { width: 62px; margin-left: 10px; padding-top: 10px; display: flex; flex-direction: column; align-items: center; }
.paste svg:first-child { margin-left: 5px; }
.paste span { margin-top: 2px; line-height: 20px; }
.paste svg:last-child { margin: 6px 1px 0 0; }
.clipcol { display: flex; flex-direction: column; gap: 12px; padding: 9px 0 0 2px; width: 33px; }
.clipchev { padding-top: 48px; margin-left: 2px; }
.combo { height: 30px; box-sizing: border-box; border: 1px solid #8a8a8a; border-radius: 5px; background: #fff; display: flex; align-items: center; justify-content: space-between; padding: 0 3px 1px 2px; }
.combo span { flex: none; }
.c142 { width: 142px; } .c63 { width: 63px; } .c180 { width: 180px; }
.font1 { grid-template-columns: 145px 71px 34px 30px; padding-left: 10px; }
.grow { display: flex; color: #444; font-size: 22px; line-height: 26px; margin-top: -2px; }
.grow span { transform: scaleX(.95); }
.grow svg { margin-top: 6px; margin-left: -2px; }
.grow.small { font-size: 18px; line-height: 32px; margin-top: -2px; }
.font2 { grid-template-columns: 43px 30px 26px 16px 8px 30px 16px 8px 30px 25px 26px 10px; padding-left: 10px; color: #444; }
.press { width: 30px; height: 30px; box-sizing: border-box; border: 1px solid #666; border-radius: 5px; background: #e9e9e9; display: flex; align-items: center; justify-content: center; }
.b { font-weight: 700; font-size: 17px; line-height: 26px; padding-bottom: 2px; }
.it { font-family: "Liberation Serif", serif; font-style: italic; font-size: 20px; position: relative; top: -1px; }
.un { font-size: 16px; text-decoration: underline; text-underline-offset: 3px; position: relative; top: -1px; }
.ltr { font-size: 18px; line-height: 20px; position: relative; top: -3px; }
.vs { width: 1px; height: 30px; background: #c8c8c8; }
.split { display: flex; }
.alleft { width: 178px; }
.al1 { grid-template-columns: 32px 26px 32px 7px 29px 10px; padding-left: 16px; }
.al2 { grid-template-columns: 32px 32px 26px 8px 32px 20px; padding-left: 16px; }
.tall { height: 78px; margin-top: 13px; }
.alright { padding-left: 12px; }
.wr { grid-template-columns: 26px 127px 10px; }
.n1 { padding-left: 10px; }
.n2 { grid-template-columns: 30px 21px 38px 21px 8px 32px 20px; padding-left: 15px; }

.bigs { display: grid; }
.st { grid-template-columns: 87px 80px 53px; padding-left: 13px; box-sizing: border-box; }
.ce { grid-template-columns: 54px 54px 54px; padding-left: 9px; box-sizing: border-box; }
.one { justify-content: center; }
.big { display: flex; flex-direction: column; align-items: center; padding-top: 10px; }
.big > svg:first-child { height: 36px; }
.big > span { line-height: 20px; margin-top: 5px; }
.big > .two { margin-top: 0; height: 20px; display: flex; align-items: center; gap: 4px; }
.two svg { margin-top: -3px; }
.big.low > span { margin-top: 7px; }
.big.low > svg:last-child { margin: 5px 1px 0 0; }
.ed { display: grid; grid-template-columns: 142px 58px 59px; }
.edleft { display: flex; flex-direction: column; padding: 3px 0 0 15px; }
.edrow { display: flex; align-items: center; height: 32px; gap: 5px; }
.edrow svg:last-child { margin-top: -3px; }
.far { margin-left: 18px; }
.collapse { padding: 103px 0 0 18px; }

.fbar { height: 30px; margin: 10px 10px 8px; display: flex; align-items: center; flex: none; }
.box { height: 30px; box-sizing: border-box; border: 1px solid #d0d0d0; border-radius: 5px; background: #fff; display: flex; align-items: center; }
.name { width: 127px; padding: 0 6px; justify-content: space-between; margin-right: 11px; font-size: 15.5px; }
.tools { width: 107px; margin-left: 11px; padding-left: 7px; gap: 11px; }
.tools svg:last-child { margin-left: -5px; }
.fx { font-family: "Liberation Serif", serif; font-style: italic; font-size: 23px; color: #222; line-height: 22px; -webkit-text-stroke: .4px #222; }
.formula { flex: 1; margin-left: 5px; padding: 0 4px 0 12px; justify-content: space-between; font-family: "Liberation Mono", monospace; font-size: 17px; }

.sheet { height: 683px; display: flex; flex: none; }
.grid { width: 1895px; overflow: hidden; background: #fff; font-family: Lato, "Open Sans", sans-serif; font-size: 28px; font-variant-ligatures: none; color: #000; }
.colhead { display: flex; height: 42px; background: #efefef; }
.corner { width: 57px; box-sizing: border-box; border-right: 1px solid #cfcfcf; border-bottom: 1px solid #d6d6d6; padding: 5px 3px 0 19px; }
.ch { box-sizing: border-box; border-right: 1px solid #d6d6d6; border-bottom: 1px solid #a8a8a8; text-align: center; line-height: 43px; color: #444; }
.ch span { transform: scaleX(.92); transform-origin: 58% 50%; }
.ch.act { background: #e0e0e0; color: #217346; border-bottom: 2px solid #217346; border-right-color: #aaa; }
.line { display: flex; height: 42px; }
.rh { width: 57px; box-sizing: border-box; border-right: 1px solid #a8a8a8; border-bottom: 1px solid #dadada; background: #efefef; color: #444; line-height: 42px; display: flex; justify-content: center; }
.actr .rh { background: #e0e0e0; color: #217346; border-right: 2px solid #217346; padding-left: 1px; }
.cell { box-sizing: border-box; border-right: 1px solid #dedede; border-bottom: 1px solid #dedede; line-height: 42px; padding: 0 4px; display: flex; flex: none; }
.head { background: #c0504d; color: #fff; font-weight: 700; border-color: #000; justify-content: center; }
.date { background: #e6b8b7; border-color: #e6b8b7; justify-content: flex-end; padding-right: 3px; }
.date.edge { padding-right: 0; }
.cat { background: #ddd9c4; border-color: #ddd9c4; }
.num { justify-content: flex-end; word-spacing: -2px; }
.flag { background: linear-gradient(135deg, #0a7d0a 8.500px, transparent 9px); }
.sel { font-weight: 700; position: relative; }
.sel::before { content: ""; position: absolute; inset: -2px -2px -2px -1px; border: 2px solid #217346; }
.sel::after { content: ""; position: absolute; right: -3px; bottom: -3px; width: 5px; height: 5px; background: #217346; border: solid #fff; border-width: 1px 0 0 1px; }
.vscroll { width: 20px; margin: 5px 0 -3px 2px; border-radius: 10px; background: #f5f5f5; display: flex; flex-direction: column; align-items: center; }
.vscroll i { width: 11px; height: 459px; border-radius: 5px; background: #6b6b6b; margin: 6px 0 191px; }
.vscroll svg:first-child { margin-top: 1px; }

.sheets { height: 40px; border-top: 1px solid #dcdcdc; box-sizing: border-box; display: flex; align-items: center; padding: 0 0 2px 31px; flex: none; }
.sheets > svg:nth-child(2) { margin-left: 33px; }
.stab { width: 165px; height: 36px; margin: -3px 0 0 60px; box-sizing: border-box; background: #fff; border: 1px solid #d8d8d8; border-top: 0; border-radius: 0 0 6px 6px; display: flex; justify-content: center; font-size: 16.5px; }
.stab b { font-weight: 600; line-height: 26px; }
.stab span { height: 31px; padding-top: 3px; box-sizing: border-box; border-bottom: 2px solid #107c41; }
.ssep { width: 1px; height: 24px; background: #c4c4c4; margin-left: 5px; }
.plus { margin-left: 52px; }
.dots { margin: 2px 0 0 777px; }
.hscroll { margin-left: 18px; width: 722px; height: 22px; border-radius: 11px; background: #f5f5f5; display: flex; align-items: center; padding: 0 6px; box-sizing: border-box; }
.hscroll i { width: 187px; height: 11px; border-radius: 5px; background: #6b6b6b; margin: 0 498px 0 6px; }

.status { height: 27px; background: #f5f5f5; border-top: 1px solid #fff; box-sizing: border-box; display: flex; align-items: center; padding-left: 14px; font-size: 13px; flex: none; }
.acc { margin: 0 2px 0 25px; }
.views { display: flex; margin-left: 1304px; height: 26px; }
.vw { width: 50px; display: flex; align-items: center; justify-content: center; }
.vw svg { margin: -1px 2px 0 0; }
.vw.on { background: #dfdfdf; }
.zoom { margin: 0 19px 0 7px; }

.task { height: 60px; box-sizing: border-box; padding: 4px 0 4px 4px; background: linear-gradient(#cfcbc8 0 4px, #efebe8 8px); flex: none; }
.bar { width: 1912px; height: 52px; border-radius: 7px; background: #ededed; display: flex; }
.weather { width: 32px; height: 40px; margin: 4px 0 0 22px; display: flex; position: relative; }
.weather svg { margin-top: -5px; }
.badge { position: absolute; left: 13px; top: 0; width: 20px; height: 20px; border-radius: 50%; background: #c42b1c; color: #fff; font-size: 12.5px; line-height: 20px; text-align: center; }
.wtext { margin: 6px 0 0 6px; width: 540px; line-height: 20px; display: flex; flex-direction: column; align-items: flex-start; flex: none; }
.dim { color: #5c5c5c; }
.apps { display: flex; margin-left: -2px; }
.app { width: 55px; height: 52px; display: flex; align-items: center; justify-content: center; position: relative; flex: none; }
.run::after, .tile::after { content: ""; position: absolute; bottom: 2px; width: 8px; height: 4px; border-radius: 2px; background: #888; }
.tile::before { content: ""; position: absolute; left: 4px; top: 1px; width: 43px; height: 49px; box-sizing: border-box; border: 1px solid #dcdcdc; border-radius: 5px; background: #f8f8f8; box-shadow: 5px 0 0 -1px #f3f3f3, 5px 0 0 0 #dcdcdc; }
.tile svg { position: relative; }
.tile::after { width: 20px; background: #2b869c; }
.chrome svg { margin: -8px 0 0 8px; }
.help { width: 27px; height: 27px; border-radius: 50%; background: #0a99dc; box-shadow: 0 0 0 1px #fff; color: #fff; font-weight: 700; font-size: 22px; line-height: 27px; text-align: center; position: relative; }
.help i { position: absolute; left: 14px; top: -8px; width: 20px; height: 20px; border-radius: 50%; background: #ffc20e; }
.tray { display: grid; align-items: center; justify-items: start; grid-template-columns: 37px 44px 51px 30px 30px 41px 78px; margin-left: 269px; flex: none; }
.lang, .clock { display: flex; flex-direction: column; align-items: center; line-height: 20px; font-size: 14.5px; }
.clock { align-items: flex-end; }
</style>
